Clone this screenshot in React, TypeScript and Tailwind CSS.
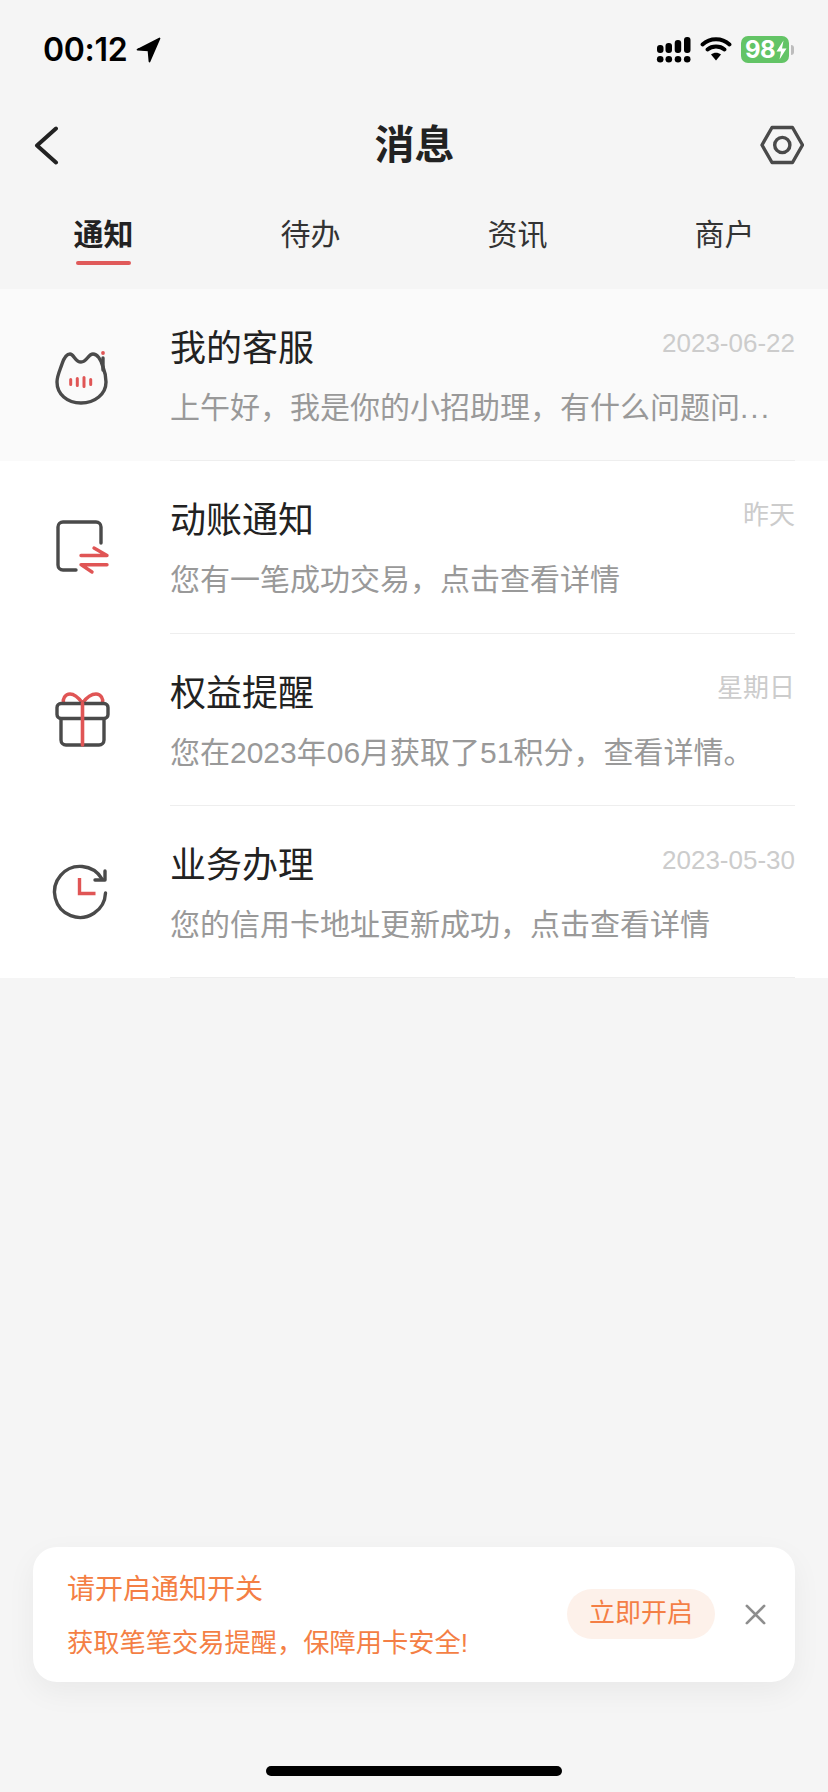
import React from "react";

const CatIcon = () => (
  <svg width="64" height="64" viewBox="0 0 64 64" fill="none" strokeLinecap="round" strokeLinejoin="round">
    <path
      d="M13 21C15 15 18 11 21 11C25 11 26 19 32 19C38 19 39 11 44 11C48 11 52 16 54 24C56 29 57 34 57 39C57 51 46 60 32 60C18 60 8 51 8 39C8 33 11 27 13 21Z"
      stroke="#4a4a4a"
      strokeWidth="3.4"
    />
    <path d="M54 15V27" stroke="#4a4a4a" strokeWidth="3.4" />
    <circle cx="54" cy="10" r="1.9" fill="#e05555" />
    <path d="M21.7 36.5V41.5M28.3 35.5V42.5M35 34.5V43.5M41.7 36.5V41.5" stroke="#e05555" strokeWidth="3" />
  </svg>
);

const TransferIcon = () => (
  <svg width="64" height="64" viewBox="0 0 64 64" fill="none" strokeLinecap="round" strokeLinejoin="round">
    <path d="M52 28V12A5 5 0 0 0 47 7H14A5 5 0 0 0 9 12V50A5 5 0 0 0 14 55H27" stroke="#4a4a4a" strokeWidth="3.4" />
    <path d="M32 40.5H58L45 33M58 49.7H32L43 57" stroke="#e05555" strokeWidth="3.4" />
  </svg>
);

const GiftIcon = () => (
  <svg width="64" height="64" viewBox="0 0 64 64" fill="none" strokeLinecap="round" strokeLinejoin="round">
    <path d="M33.5 15C29 9 25 6 21 6C16 6 13.5 11 14.5 15M33.5 15C38 9 42 6 47 6C52 6 54.5 11 53.5 15" stroke="#e05555" strokeWidth="3.4" />
    <rect x="8" y="15.5" width="51" height="15" rx="4" stroke="#4a4a4a" strokeWidth="3.4" />
    <path d="M12 31V52A5 5 0 0 0 17 57H50A5 5 0 0 0 55 52V31" stroke="#4a4a4a" strokeWidth="3.4" />
    <path d="M33.5 15V57" stroke="#e05555" strokeWidth="3.6" />
  </svg>
);

const ClockIcon = () => (
  <svg width="64" height="64" viewBox="0 0 64 64" fill="none" strokeLinecap="round" strokeLinejoin="round">
    <path d="M56.5 33A25.5 25.5 0 1 1 53 19" stroke="#4a4a4a" strokeWidth="3.4" />
    <path d="M56 11V20H46" stroke="#4a4a4a" strokeWidth="3.4" />
    <path d="M30.5 18V33.5H46.5" stroke="#e05555" strokeWidth="3.4" strokeLinecap="butt" strokeLinejoin="miter" />
  </svg>
);

const rows = [
  {
    title: "我的客服",
    desc: (
      <>
        上午好，我是你的小招助理，有什么问题问<span className="tracking-[2px]">...</span>
      </>
    ),
    time: "2023-06-22",
    icon: <CatIcon />,
    bg: "bg-[#fafafa]",
  },
  { title: "动账通知", desc: "您有一笔成功交易，点击查看详情", time: "昨天", icon: <TransferIcon />, bg: "bg-white" },
  { title: "权益提醒", desc: "您在2023年06月获取了51积分，查看详情。", time: "星期日", icon: <GiftIcon />, bg: "bg-white" },
  { title: "业务办理", desc: "您的信用卡地址更新成功，点击查看详情", time: "2023-05-30", icon: <ClockIcon />, bg: "bg-white" },
];

const tabs = ["通知", "待办", "资讯", "商户"];

export default function App() {
  return (
    <div className="w-[828px] h-[1792px] bg-[#f5f5f5] flex flex-col font-['Liberation_Sans','Noto_Sans_CJK_SC',sans-serif] overflow-hidden">
      {/* status bar */}
      <div className="h-[100px] flex justify-between pl-[43px] pr-[34px] pt-[30px]">
        <div className="flex items-start gap-[9px]">
          <span className="font-['Inter',sans-serif] font-semibold text-[32px] leading-[40px] text-black tracking-[-0.3px]">00:12</span>
          <svg width="25" height="26" viewBox="0 0 24 26" className="mt-[7px]">
            <path d="M23 1.5L1 12.7L12 13.4L13 24.5Z" fill="#000" stroke="#000" strokeWidth="1.8" strokeLinejoin="round" />
          </svg>
        </div>
        <div className="flex items-start">
          <svg width="38" height="30" viewBox="0 0 38 30" className="mt-[6px]">
            <g fill="#000">
              <rect x="1" y="9" width="6.5" height="8" rx="3" />
              <rect x="9.5" y="7" width="6.5" height="10" rx="3" />
              <rect x="18.7" y="4" width="6.5" height="13" rx="3" />
              <rect x="28" y="1" width="6.5" height="16" rx="3" />
              <circle cx="4.2" cy="23.3" r="3.3" />
              <circle cx="12.8" cy="23.3" r="3.3" />
              <circle cx="22" cy="23.3" r="3.3" />
              <circle cx="31.2" cy="23.3" r="3.3" />
            </g>
          </svg>
          <svg width="32" height="26" viewBox="0 0 32 26" className="ml-[6px] mt-[6px]">
            <path d="M2.5 8.5C10 1.5 22 1.5 29.5 8.5M7.5 13.5C12 9.5 20 9.5 24.5 13.5" fill="none" stroke="#000" strokeWidth="3.8" strokeLinecap="round" />
            <path d="M11 18.5C14 16 18 16 21 18.5L16 24.5Z" fill="#000" />
          </svg>
          <div className="ml-[9px] w-[48px] h-[27px] mt-[6px] rounded-[7px] bg-[#63c466] flex items-center pl-[4px] text-white font-['Inter',sans-serif] font-bold text-[24px] leading-none tracking-[-0.5px]">
            98
            <svg width="11" height="20" viewBox="0 0 11 20" className="ml-[1px]">
              <path d="M7.5 0.5L0.5 11.5H5L3.5 19.5L10.5 8.5H6Z" fill="#fff" />
            </svg>
          </div>
          <div className="ml-[2px] mt-[15px] w-[3px] h-[10px] rounded-r-[3px] bg-[#bdbdbd]" />
        </div>
      </div>

      {/* nav */}
      <div className="h-[88px] grid grid-cols-[1fr_auto_1fr] items-center pl-[33px] pr-[24px] pt-[2px]">
        <svg width="28" height="40" viewBox="0 0 28 40" fill="none">
          <path d="M23 3.5L4 20.5L23 37.5" stroke="#222" strokeWidth="4" strokeLinecap="round" strokeLinejoin="round" />
        </svg>
        <h1 className="text-[40px] leading-none font-bold text-[#222] pr-[8px]">消息</h1>
        <svg width="44" height="40" viewBox="0 0 44 40" fill="none" className="justify-self-end">
          <path d="M2 20L12 2.5H32.5L42.5 20L32.5 37.5H12Z" stroke="#4a4a4a" strokeWidth="3.4" strokeLinejoin="round" />
          <circle cx="22.3" cy="20" r="7.6" stroke="#4a4a4a" strokeWidth="3.4" />
        </svg>
      </div>

      {/* tabs */}
      <div className="h-[101px] grid grid-cols-4 pt-[27px]">
        {tabs.map((t, i) => (
          <div key={t} className="flex flex-col items-center">
            <span className={i === 0 ? "text-[30px] leading-[40px] font-bold text-[#222]" : "text-[30px] leading-[40px] text-[#333]"}>{t}</span>
            {i === 0 && <div className="mt-[6px] w-[55px] h-[4px] rounded-full bg-[#e05a5a]" />}
          </div>
        ))}
      </div>

      {/* list */}
      <div>
        {rows.map((r) => (
          <div key={r.title} className={`h-[172.25px] flex items-center ${r.bg}`}>
            <div className="ml-[49px] mr-[57px] w-[64px] h-[64px] shrink-0">{r.icon}</div>
            <div className="flex-1 h-full min-w-0 pr-[33px]">
              <div className="h-full border-b border-[#eeeeee]">
                <div className="flex justify-between pt-[36px]">
                  <span className="text-[36px] leading-[48px] text-[#222]">{r.title}</span>
                  <span className="text-[26px] leading-[40px] text-[#cccccc] -mt-[2px]">{r.time}</span>
                </div>
                <div className="mt-[13px] text-[30px] leading-[44px] text-[#999999] whitespace-nowrap">{r.desc}</div>
              </div>
            </div>
          </div>
        ))}
      </div>

      <div className="flex-1" />

      {/* notification prompt */}
      <div className="mx-[33px] h-[135px] rounded-[24px] bg-white shadow-[0_10px_30px_rgba(0,0,0,0.05)] flex items-center pl-[34px] pr-[28px] text-[#f47f45]">
        <div className="flex-1 pt-[4px]">
          <div className="text-[28px] leading-[40px]">请开启通知开关</div>
          <div className="mt-[13px] text-[26.25px] leading-[40px]">获取笔笔交易提醒，保障用卡安全!</div>
        </div>
        <div className="w-[148px] h-[50px] rounded-full bg-[#fdf1ea] flex items-center justify-center text-[26px] -mt-[2px]">立即开启</div>
        <svg width="23" height="23" viewBox="0 0 24 24" className="ml-[29px]" fill="none">
          <path d="M3 3L21 21M21 3L3 21" stroke="#8e8e8e" strokeWidth="2.8" strokeLinecap="round" />
        </svg>
      </div>

      {/* home indicator */}
      <div className="mt-[84px] mb-[16px] mx-auto w-[296px] h-[10px] rounded-full bg-black" />
    </div>
  );
}
